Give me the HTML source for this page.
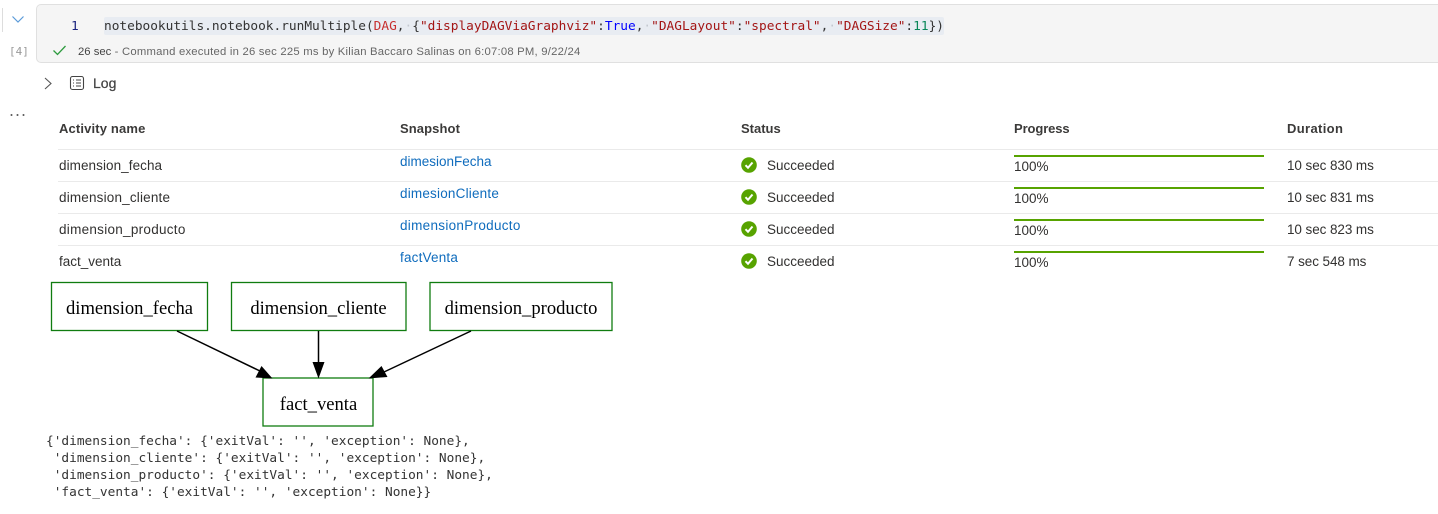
<!DOCTYPE html>
<html><head><meta charset="utf-8">
<style>
html,body{margin:0;padding:0;background:#fff;width:1438px;height:514px;overflow:hidden}
.t{position:absolute;white-space:pre;font-family:"Liberation Sans",sans-serif;font-size:13.5px;line-height:18px;color:#323130}
.m{font-family:"DejaVu Sans Mono",monospace;font-size:12.8px;line-height:18px;color:#333}
.b{font-weight:700;color:#3b3a39;font-size:13px}
.l{color:#0f6cbd;font-size:13.5px}
.hr{position:absolute;left:58px;right:0;height:1px;background:#eaeaea}
.pb{position:absolute;left:1014px;width:250px;height:2px;background:#57a300}
.r{color:#a31515}.n{color:#098658}.k{color:#0000ff}.d{color:#c72e2e}.w{color:#c3c8cf}
.o{font-family:"DejaVu Sans Mono",monospace;font-size:12.8px;line-height:17px;color:#333}
svg{position:absolute;overflow:visible}
</style></head><body>
<div style="position:absolute;left:2px;top:8px;width:1px;height:24px;background:#ddd"></div>
<svg style="left:0;top:0" width="40" height="125">
<path d="M12.5 16.5L18 22L23.5 16.5" fill="none" stroke="#5b9bd9" stroke-width="1.2"/>
<circle cx="11.5" cy="115" r="1" fill="#555"/><circle cx="17.5" cy="115" r="1" fill="#555"/><circle cx="23.5" cy="115" r="1" fill="#555"/>
</svg>
<div class="t m" style="left:9px;top:43px;color:#999;font-size:11px">[4]</div>
<div style="position:absolute;left:36px;top:4px;width:1402px;height:59px;box-sizing:border-box;background:#f5f5f5;border:1px solid #e0e0e0;border-right:0;border-radius:5px 0 0 5px"></div>
<div style="position:absolute;left:104px;top:17px;width:840px;height:18px;background:#e8ecf2;border-radius:2px"></div>
<div class="t m" style="left:71px;top:18px;color:#1a237e">1</div>
<div class="t m" style="left:104px;top:18px">notebookutils.notebook.runMultiple(<span class="d">DAG</span>,<span class="w">·</span>{<span class="r">"displayDAGViaGraphviz"</span>:<span class="k">True</span>,<span class="w">·</span><span class="r">"DAGLayout"</span>:<span class="r">"spectral"</span>,<span class="w">·</span><span class="r">"DAGSize"</span>:<span class="n">11</span>})</div>
<svg style="left:0;top:0" width="70" height="62"><path d="M53.5 50.5L57.5 54.5L65.5 46" fill="none" stroke="#2e9b3f" stroke-width="1.3"/></svg>
<div class="t" style="left:78px;top:43px;font-size:11.3px;color:#666"><span style="color:#444">26 sec</span><span style="letter-spacing:.215px"> - Command executed in 26 sec 225 ms by Kilian Baccaro Salinas on 6:07:08 PM, 9/22/24</span></div>
<svg style="left:0;top:69px" width="90" height="30">
<path d="M45 9L51 14.500L45 20" fill="none" stroke="#555" stroke-width="1.1"/>
<rect x="70.500" y="7.500" width="13" height="13" rx="2" fill="none" stroke="#444" stroke-width="1.100"/>
<path d="M73 11h1M73 14h1M73 17h1M76 11h5M76 14h5M76 17h5" stroke="#444" stroke-width="1" fill="none"/>
</svg>
<div class="t" style="left:93px;top:74px;color:#444;font-size:14px;-webkit-text-stroke:.25px #444">Log</div>

<div class="t b" style="left:59px;top:120px;letter-spacing:.15px">Activity name</div>
<div class="t b" style="left:400px;top:120px;letter-spacing:.1px">Snapshot</div>
<div class="t b" style="left:741px;top:120px">Status</div>
<div class="t b" style="left:1014px;top:120px;letter-spacing:-.1px">Progress</div>
<div class="t b" style="left:1287px;top:120px;letter-spacing:.35px">Duration</div>
<div class="hr" style="top:149px"></div><div class="hr" style="top:181px"></div><div class="hr" style="top:213px"></div><div class="hr" style="top:245px"></div>

<div class="t" style="left:59px;top:157px;letter-spacing:.07px">dimension_fecha</div>
<div class="t" style="left:59px;top:189px;letter-spacing:.18px">dimension_cliente</div>
<div class="t" style="left:59px;top:221px;letter-spacing:.28px">dimension_producto</div>
<div class="t" style="left:59px;top:253px">fact_venta</div>
<div class="t l" style="left:400px;top:153px">dimesionFecha</div>
<div class="t l" style="left:400px;top:185px;letter-spacing:.2px">dimesionCliente</div>
<div class="t l" style="left:400px;top:217px;letter-spacing:.3px">dimensionProducto</div>
<div class="t l" style="left:400px;top:249px;letter-spacing:.2px">factVenta</div>

<svg style="left:741px;top:157px" width="16" height="112">
<g><circle cx="8" cy="8" r="7.800" fill="#57a300"/><path d="M4.500 8.200L7 10.800L11.500 5.500" fill="none" stroke="#fff" stroke-width="2"/></g>
<g transform="translate(0 32)"><circle cx="8" cy="8" r="7.800" fill="#57a300"/><path d="M4.500 8.200L7 10.800L11.500 5.500" fill="none" stroke="#fff" stroke-width="2"/></g>
<g transform="translate(0 64)"><circle cx="8" cy="8" r="7.800" fill="#57a300"/><path d="M4.500 8.200L7 10.800L11.500 5.500" fill="none" stroke="#fff" stroke-width="2"/></g>
<g transform="translate(0 96)"><circle cx="8" cy="8" r="7.800" fill="#57a300"/><path d="M4.500 8.200L7 10.800L11.500 5.500" fill="none" stroke="#fff" stroke-width="2"/></g>
</svg>
<div class="t" style="left:767px;top:157px">Succeeded</div>
<div class="t" style="left:767px;top:189px">Succeeded</div>
<div class="t" style="left:767px;top:221px">Succeeded</div>
<div class="t" style="left:767px;top:253px">Succeeded</div>

<div class="pb" style="top:155px"></div><div class="pb" style="top:187px"></div><div class="pb" style="top:219px"></div><div class="pb" style="top:251px"></div>
<div class="t" style="left:1014px;top:158px">100%</div>
<div class="t" style="left:1014px;top:190px">100%</div>
<div class="t" style="left:1014px;top:222px">100%</div>
<div class="t" style="left:1014px;top:254px">100%</div>

<div class="t" style="left:1287px;top:157px;letter-spacing:-.08px">10 sec 830 ms</div>
<div class="t" style="left:1287px;top:189px;letter-spacing:-.08px">10 sec 831 ms</div>
<div class="t" style="left:1287px;top:221px;letter-spacing:-.08px">10 sec 823 ms</div>
<div class="t" style="left:1287px;top:253px;letter-spacing:-.08px">7 sec 548 ms</div>

<svg style="left:0;top:0" width="640" height="440">
<g fill="none" stroke="#107c10" stroke-width="1.300">
<rect x="51.500" y="282.500" width="156" height="48"/>
<rect x="231.500" y="282.500" width="174.500" height="48"/>
<rect x="430" y="282.500" width="182" height="48"/>
<rect x="263" y="378" width="110" height="48"/>
</g>
<g stroke="#000" stroke-width="1.500" fill="none">
<path d="M177 331L262 372"/><path d="M318.500 331L318.500 365"/><path d="M471 331L384 372"/>
</g>
<g fill="#000">
<path d="M272.500 378.500L255.500 377.500L261.500 366Z"/>
<path d="M318.500 378.500L312.500 362L324.500 362Z"/>
<path d="M368.500 378.500L381.500 366L387.500 377Z"/>
</g>
<g font-family="Liberation Serif,serif" font-size="18.600" text-anchor="middle" fill="#000">
<text x="129.500" y="314">dimension_fecha</text>
<text x="318.500" y="314">dimension_cliente</text>
<text x="521" y="314">dimension_producto</text>
<text x="318.500" y="410">fact_venta</text>
</g>
</svg>

<div class="t o" style="left:46px;top:433px">{'dimension_fecha': {'exitVal': '', 'exception': None},
 'dimension_cliente': {'exitVal': '', 'exception': None},
 'dimension_producto': {'exitVal': '', 'exception': None},
 'fact_venta': {'exitVal': '', 'exception': None}}</div>
</body></html>
